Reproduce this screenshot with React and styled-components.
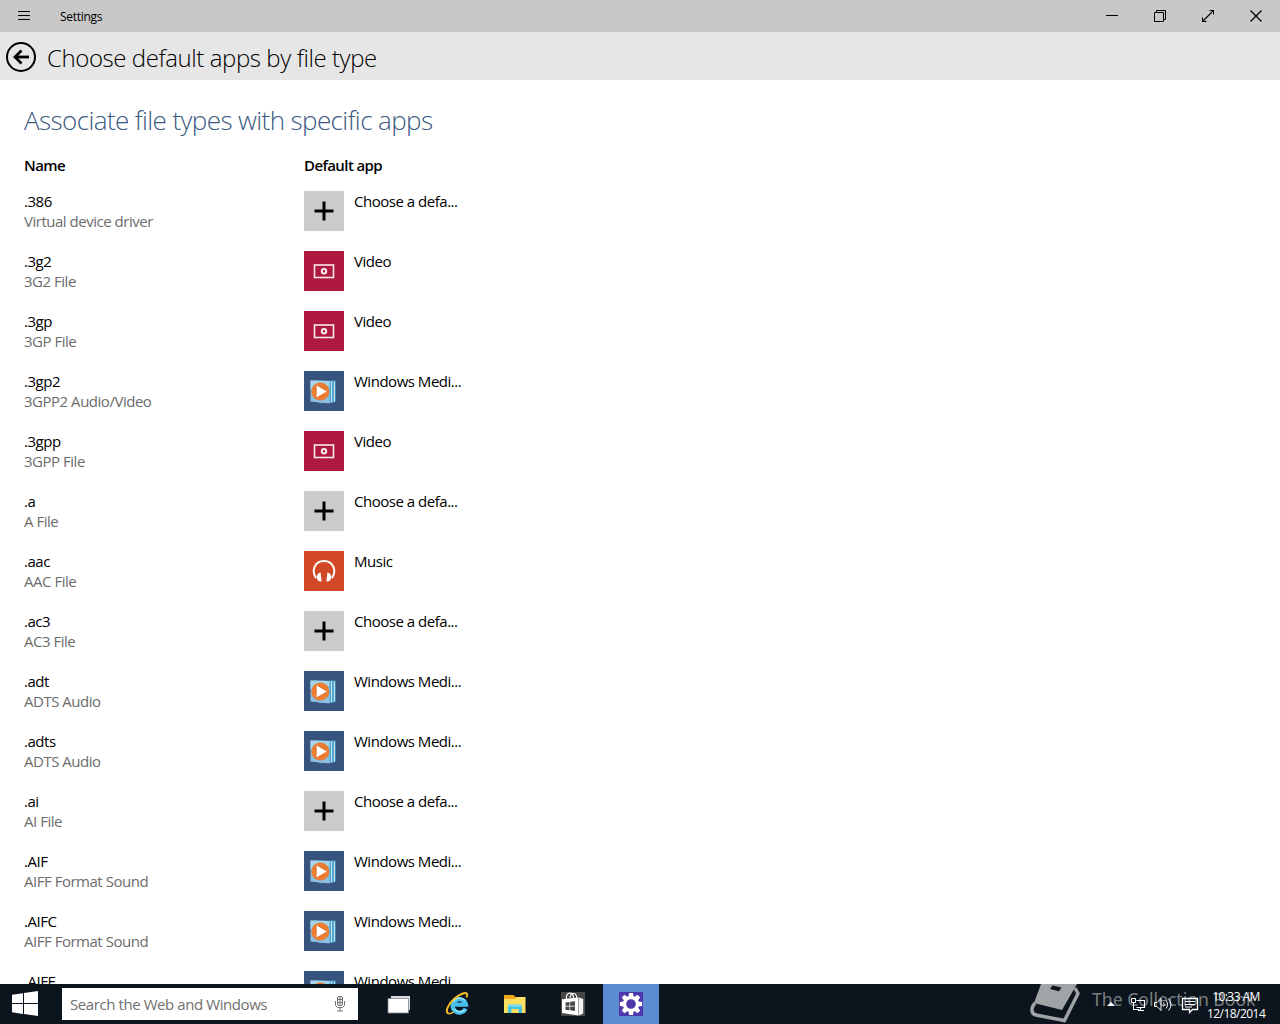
import React from 'react';
import styled, {createGlobalStyle, css} from "styled-components";

const colors = {
    titleBar: '#c8c8c8',
    header: '#e6e6e6',
    accent: '#3b5a82',
    grey: '#6c6c6c',
    taskbar: '#0c151d',
    activeTask: '#5b8bd0'
};

const GlobalStyle = createGlobalStyle`
  * {
    box-sizing: border-box;
  }

  body {
    margin: 0;
    background: #fff;
    overflow: hidden;
    font-family: "Open Sans", "Noto Sans", sans-serif;
  }

  svg {
    display: block;
    flex: none;
  }
`;

const Desktop = styled.div`
  display: flex;
  flex-direction: column;
  width: 1280px;
  height: 1024px;
  color: #000;
`;
const TitleBar = styled.div`
  display: flex;
  flex: none;
  align-items: center;
  height: 32px;
  background: ${colors.titleBar};
`;
const AppTitle = styled.span`
  flex: 1;
  padding-left: 12px;
  font-size: 12px;
  letter-spacing: -0.3px;
`;
const CaptionButton = styled.div`
  display: flex;
  align-items: center;
  justify-content: center;
  width: 48px;
  height: 32px;
`;
const Header = styled.header`
  display: flex;
  flex: none;
  align-items: center;
  gap: 10px;
  height: 48px;
  padding: 2px 5px 0;
  background: ${colors.header};
`;
const PageTitle = styled.h1`
  margin: 0;
  padding-top: 1px;
  font-size: 24px;
  line-height: 32px;
  font-weight: 300;
  letter-spacing: -0.42px;
  white-space: nowrap;
`;
const Content = styled.main`
  flex: 1;
  min-height: 0;
  padding: 23px 24px 0;
  overflow: hidden;
`;
const SectionTitle = styled.h2`
  margin: 0;
  color: ${colors.accent};
  font-size: 26px;
  line-height: 34px;
  font-weight: 300;
  letter-spacing: -0.6px;
  white-space: nowrap;
`;
const columns = css`
  display: grid;
  grid-template-columns: 280px 160px;
`;
const TableHead = styled.div`
  ${columns};
  margin: 18px 0 16px;
  font-size: 15px;
  line-height: 20px;
  font-weight: 600;
  letter-spacing: -0.6px;
`;
const Row = styled.div`
  ${columns};
  height: 60px;
  font-size: 15px;
  line-height: 20px;
  letter-spacing: -0.48px;
  white-space: nowrap;
`;
const Description = styled.div`
  color: ${colors.grey};
`;
const AppChoice = styled.div`
  display: flex;
  gap: 10px;
`;
const Tile = styled.div`
  display: flex;
  flex: none;
  width: 40px;
  height: 40px;
  background: ${props => props.$color};
`;

const Taskbar = styled.footer`
  position: relative;
  display: flex;
  flex: none;
  align-items: center;
  height: 40px;
  background: ${colors.taskbar};
  overflow: hidden;
`;
const StartButton = styled.div`
  display: flex;
  width: 62px;
  padding-left: 12px;
`;
const SearchBox = styled.div`
  display: flex;
  align-items: center;
  justify-content: space-between;
  width: 296px;
  height: 32px;
  margin-right: 13px;
  padding: 0 12px 0 8px;
  background: #fff;
  color: #707070;
  font-size: 15px;
  letter-spacing: -0.42px;
`;
const TaskButton = styled.div`
  display: flex;
  align-items: center;
  justify-content: center;
  width: 56px;
  height: 40px;
  margin-right: 2px;
  background: ${props => props.$active ? colors.activeTask : 'transparent'};
`;
const Tray = styled.div`
  display: flex;
  align-items: center;
  margin-left: auto;
  padding-right: 15px;
`;
const Clock = styled.div`
  width: 58px;
  margin-left: 8px;
  padding-top: 1px;
  color: #fff;
  font-size: 12px;
  line-height: 17px;
  letter-spacing: -0.55px;
  text-align: center;
  white-space: nowrap;
`;
const Watermark = styled.div`
  position: absolute;
  top: 0;
  left: 1028px;
  display: flex;
  align-items: flex-start;
  gap: 10px;
  color: rgba(255, 255, 255, 0.45);
  font-family: "Noto Sans", sans-serif;
  font-size: 17.6px;
  line-height: 30px;
  white-space: nowrap;
`;

const PlusIcon = () => (
    <svg width="40" height="40">
        <path d="M20 10.5v19M10.5 20h19" stroke="#000" strokeWidth="3"/>
    </svg>
);

const VideoIcon = () => (
    <svg width="40" height="40" fill="none" stroke="#fbe9ee">
        <rect x="10.5" y="14" width="19" height="12.5" strokeWidth="1.6"/>
        <circle cx="20" cy="20.2" r="2.2" strokeWidth="2"/>
    </svg>
);

const MusicIcon = () => (
    <svg width="40" height="40" fill="none">
        <path d="M12.200 27C9.500 24 9.300 19 10.300 16.500C12 12 15.500 9.900 20 9.900S28 12 29.700 16.500C30.700 19 30.500 24 27.800 27" stroke="#fff" strokeWidth="2"/>
        <path d="M16.600 21.500l1 8.800c-2.300.8-4.600-1-4.800-3.600-.2-2.700 1.300-5 3.800-5.200zM23.400 21.500l-1 8.800c2.300.8 4.600-1 4.800-3.600.2-2.700-1.300-5-3.800-5.200z" fill="#fff"/>
    </svg>
);

const MediaPlayerIcon = () => (
    <svg width="40" height="40">
        <path d="M11 9.500l20 .5v21l-16 1.500z" fill="#4f87b5"/>
        <path d="M25 9.500h6.500v21.500l-6.500 1z" fill="#4c9fca"/>
        <path d="M27.500 10v21.500M30.500 10.500v20" stroke="#b9e4f5" strokeWidth="1.200"/>
        <path d="M6.500 9.500l19 .5v22.500l-19-2z" fill="#8dc0e0"/>
        <path d="M6.500 9.500l19 .5v5l-19 3z" fill="#a8d4ea"/>
        <circle cx="16.300" cy="20.500" r="9" fill="#e9762a"/>
        <circle cx="16.300" cy="20.500" r="7" fill="none" stroke="#f08c42" strokeWidth="1"/>
        <path d="M12.700 14.500v11.800l10-5.900z" fill="#fff"/>
    </svg>
);

const BackIcon = () => (
    <svg width="32" height="32" fill="none" stroke="#000">
        <circle cx="16" cy="16" r="14" strokeWidth="2"/>
        <path d="M24 16H10" strokeWidth="2.800"/>
        <path d="M16.500 9.500L10 16l6.500 6.500" strokeWidth="2.800"/>
    </svg>
);

const StartIcon = () => (
    <svg width="26" height="26" fill="#fff">
        <path d="M0 3.800L11 2.200V12H0zM12 2L26 0v12H12zM0 13h11v9.900L0 21.300zM12 13h14v12L12 23z"/>
    </svg>
);

const MicIcon = () => (
    <svg width="12" height="18" fill="none" stroke="#707070">
        <rect x="3.500" y="1.500" width="5" height="9" rx="1.500"/>
        <path d="M6 2v8M4 4.500h4M4 7.500h4M1.500 6v4.500l2 2h5l2-2V6M6 13v3M3 16h6"/>
    </svg>
);

const TaskViewIcon = () => (
    <svg width="24" height="24">
        <path d="M4 4h19v14H4z" fill="#d9dcde"/>
        <path d="M1 6.500h20.500v14.500H1z" fill="#fff" stroke="#7d8388" strokeWidth=".8"/>
    </svg>
);

const ExplorerBrowserIcon = () => (
    <svg width="26" height="26" fill="none">
        <path d="M21.600 17.500A6.700 6.700 0 1 1 22 13.700H11" stroke="#49bfee" strokeWidth="4.200"/>
        <path d="M9.500 10.500C11 7 18 5.500 21 9.500M10 17.500c2 3.500 7 4.500 10.500 1.500" stroke="#a5e8fb" strokeWidth="1.300"/>
        <path d="M4.500 22.500C.8 21 4 13 10.500 7.500 16 3 21.500 1 23 2.800c.6 1 .2 2.400-.6 3.700" stroke="#f5bd26" strokeWidth="2"/>
        <path d="M4.500 22.500c1.500.6 3.500-.5 5-1.400" stroke="#f5bd26" strokeWidth="1.500"/>
    </svg>
);

const FolderIcon = () => (
    <svg width="24" height="24">
        <path d="M1 3h9.500l2 2H22v4H1z" fill="#f0a81c"/>
        <path d="M1 7h11l1.500-2H22.500v16H1z" fill="#ffdf5e"/>
        <path d="M5 12.500h14v8.500h-3.500v-4h-7v4H5z" fill="#45c3df"/>
        <path d="M5 12.500h14v2H5z" fill="#8be0ee"/>
    </svg>
);

const StoreIcon = () => (
    <svg width="24" height="24">
        <path d="M0 0h24v24H0z" fill="#484848"/>
        <path d="M1 7.200L17.500 5.500V23.500L1 21z" fill="#fff"/>
        <path d="M18 5.500l4.200 1.500V21.500l-4.200 2z" fill="#f1f1f1"/>
        <path d="M5.500 7C5 3.500 6 1.500 8.500 1.200 11 1 12.500 3 12.500 6M9 6c.3-3 1.500-4.500 3.500-4.500 2.200 0 3.200 2 3.300 5" fill="none" stroke="#fff" strokeWidth="1.200"/>
        <path d="M4.500 10.400l4-.5v3.800h-4zM9.200 9.800l4.800-.6v4.500H9.200zM4.500 14.400h4v3.800l-4-.5zM9.200 14.400H14v4.500l-4.800-.6z" fill="#484848"/>
    </svg>
);

const gearTeeth = [0, 45, 90, 135, 180, 225, 270, 315];

const SettingsIcon = () => (
    <svg width="24" height="24">
        <path d="M0 0h24v24H0z" fill="#4e36ad"/>
        <g fill="#fff">
            {gearTeeth.map(angle => (
                <path key={angle} d="M9.500 5L10 .9h4l.5 4.100z" transform={`rotate(${angle} 12 12)`}/>
            ))}
        </g>
        <circle cx="12" cy="12" r="6.500" fill="none" stroke="#fff" strokeWidth="3.400"/>
    </svg>
);

const TrayIcons = () => (
    <svg width="92" height="24" fill="none" stroke="#fff">
        <path d="M0 14l4-4 4 4z" fill="#fff" stroke="none"/>
        <path d="M29.500 8.500h8v7h-8M31 18.500h6M33.500 16v2" strokeWidth="1.200"/>
        <path d="M24.500 6.500h4v4h-4zM26.500 11v7M26 17.500h6"/>
        <path d="M47.500 10.500h2.500l4-4v12l-4-4h-2.500zM56.500 10.500q1.500 2 0 4M59 8.500q3.200 4 0 8M61.500 6.500q5 6 0 12"/>
        <path d="M75.500 6.500h15v11h-5l-3 3v-3h-7z" strokeWidth="1.300"/>
        <path d="M78 9.500h10M78 12.500h10M78 15h7"/>
    </svg>
);

const BookIcon = () => (
    <svg width="54" height="40">
        <path d="M13 0H49L34 26 6 19z" fill="#a0a4a7"/>
        <path d="M24.500 1.500l9 2-2.500 3.700-9-2.200z" fill={colors.taskbar}/>
        <path d="M7 19C2.500 24 3 30 8 31l28.500 5.500L50 9.500 47 4" fill="none" stroke="#a0a4a7" strokeWidth="3.400"/>
    </svg>
);

const apps = {
    none: {label: 'Choose a defa...', color: '#cbcbcb', Icon: PlusIcon},
    video: {label: 'Video', color: '#b0193f', Icon: VideoIcon},
    media: {label: 'Windows Medi...', color: '#37547f', Icon: MediaPlayerIcon},
    music: {label: 'Music', color: '#d24726', Icon: MusicIcon}
};

const fileTypes = [
    {ext: '.386', description: 'Virtual device driver', app: 'none'},
    {ext: '.3g2', description: '3G2 File', app: 'video'},
    {ext: '.3gp', description: '3GP File', app: 'video'},
    {ext: '.3gp2', description: '3GPP2 Audio/Video', app: 'media'},
    {ext: '.3gpp', description: '3GPP File', app: 'video'},
    {ext: '.a', description: 'A File', app: 'none'},
    {ext: '.aac', description: 'AAC File', app: 'music'},
    {ext: '.ac3', description: 'AC3 File', app: 'none'},
    {ext: '.adt', description: 'ADTS Audio', app: 'media'},
    {ext: '.adts', description: 'ADTS Audio', app: 'media'},
    {ext: '.ai', description: 'AI File', app: 'none'},
    {ext: '.AIF', description: 'AIFF Format Sound', app: 'media'},
    {ext: '.AIFC', description: 'AIFF Format Sound', app: 'media'},
    {ext: '.AIFF', description: 'AIFF Format Sound', app: 'media'}
];

const FileTypeRow = ({ext, description, app}) => {
    const {label, color, Icon} = apps[app];

    return (
        <Row>
            <div>
                <div>{ext}</div>
                <Description>{description}</Description>
            </div>
            <AppChoice>
                <Tile $color={color}><Icon/></Tile>
                <span>{label}</span>
            </AppChoice>
        </Row>
    );
};

const WindowTitleBar = () => (
    <TitleBar>
        <CaptionButton>
            <svg width="12" height="12" stroke="#000"><path d="M0 1.500h12M0 5.500h12M0 9.500h12"/></svg>
        </CaptionButton>
        <AppTitle>Settings</AppTitle>
        <CaptionButton>
            <svg width="12" height="12" stroke="#000"><path d="M0 5.500h12"/></svg>
        </CaptionButton>
        <CaptionButton>
            <svg width="12" height="12" fill="none" stroke="#000">
                <path d="M.5 2.500h9v9h-9zM2.500 2V.5h9v9H10"/>
            </svg>
        </CaptionButton>
        <CaptionButton>
            <svg width="12" height="12" fill="none" stroke="#000">
                <path d="M1 11L11 1M7.500.5h4v4M.5 7.500v4h4" strokeWidth="1.100"/>
            </svg>
        </CaptionButton>
        <CaptionButton>
            <svg width="12" height="12" stroke="#000"><path d="M.5.5l11 11M11.500.5l-11 11" strokeWidth="1.300"/></svg>
        </CaptionButton>
    </TitleBar>
);

const App = () => {
    return (
        <Desktop>
            <GlobalStyle/>
            <WindowTitleBar/>
            <Header>
                <BackIcon/>
                <PageTitle>Choose default apps by file type</PageTitle>
            </Header>
            <Content>
                <SectionTitle>Associate file types with specific apps</SectionTitle>
                <TableHead>
                    <span>Name</span>
                    <span>Default app</span>
                </TableHead>
                {fileTypes.map(fileType => <FileTypeRow key={fileType.ext} {...fileType}/>)}
            </Content>
            <Taskbar>
                <StartButton><StartIcon/></StartButton>
                <SearchBox>
                    <span>Search the Web and Windows</span>
                    <MicIcon/>
                </SearchBox>
                <TaskButton><TaskViewIcon/></TaskButton>
                <TaskButton><ExplorerBrowserIcon/></TaskButton>
                <TaskButton><FolderIcon/></TaskButton>
                <TaskButton><StoreIcon/></TaskButton>
                <TaskButton $active><SettingsIcon/></TaskButton>
                <Watermark>
                    <BookIcon/>
                    <span>The Collection Book</span>
                </Watermark>
                <Tray>
                    <TrayIcons/>
                    <Clock>
                        <div>10:33 AM</div>
                        <div>12/18/2014</div>
                    </Clock>
                </Tray>
            </Taskbar>
        </Desktop>
    );
};

export default App;
